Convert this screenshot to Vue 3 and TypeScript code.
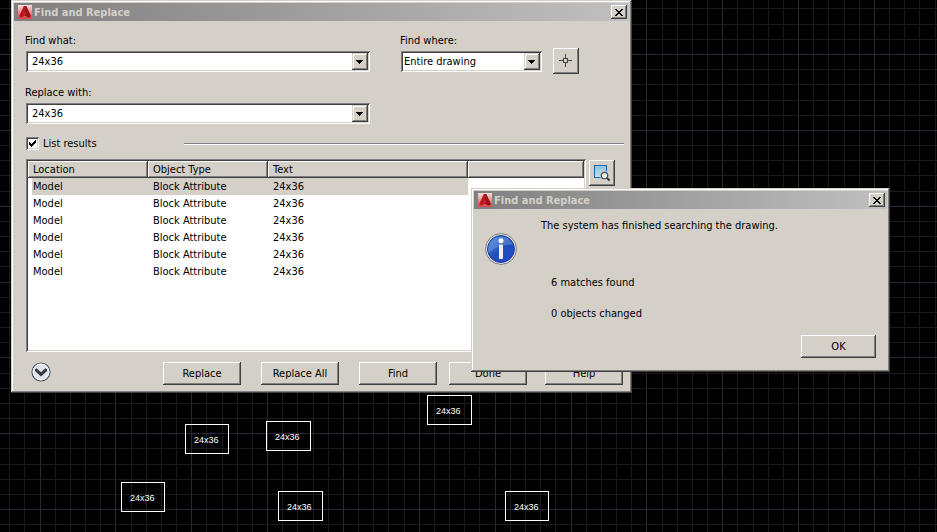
<script setup lang="ts">
import { ref } from 'vue'

interface ResultRow {
  id: number
  location: string
  type: string
  text: string
}

interface Block {
  x: number
  y: number
  w: number
}

const findText = ref('24x36')
const replaceText = ref('24x36')
const scope = ref('Entire drawing')
const listResults = ref(true)
const selected = ref(1)

const results: ResultRow[] = Array.from({ length: 6 }, (_, i) => ({
  id: i + 1,
  location: 'Model',
  type: 'Block Attribute',
  text: '24x36',
}))

const blocks: Block[] = [
  { x: 427, y: 395, w: 45 },
  { x: 185, y: 424, w: 44 },
  { x: 266, y: 421, w: 45 },
  { x: 121, y: 482, w: 44 },
  { x: 278, y: 491, w: 45 },
  { x: 505, y: 491, w: 44 },
]

// Every fifth grid line is a major one.
const step = 15.17
function gridLines(origin: number, from: number, count: number) {
  return Array.from({ length: count }, (_, k) => {
    const i = from + k
    return { at: Math.floor(origin + i * step), major: i % 5 === 0 }
  })
}
const columns = gridLines(40.05, -2, 180)
const rows = gridLines(54.5, -3, 120)
</script>

<template>
  <main class="canvas">
    <svg class="grid" aria-hidden="true" shape-rendering="crispEdges">
      <rect v-for="c in columns" :key="'c' + c.at" :x="c.at" y="0" width="1" height="100%" :class="c.major ? 'major' : 'minor'" />
      <rect v-for="r in rows" :key="'r' + r.at" x="0" :y="r.at" width="100%" height="1" :class="r.major ? 'major' : 'minor'" />
    </svg>

    <div
      v-for="(b, i) in blocks"
      :key="i"
      class="block"
      :style="{ left: b.x + 'px', top: b.y + 'px', width: b.w + 'px' }"
    >24x36</div>

    <section class="window find" role="dialog" aria-labelledby="find-title">
      <header class="titlebar">
        <svg class="logo" viewBox="0 0 14 14" aria-hidden="true">
          <defs>
            <linearGradient id="logo-bg" x1="0" y1="0" x2="0" y2="1">
              <stop offset="0" stop-color="#f6dedd" />
              <stop offset="1" stop-color="#dd4247" />
            </linearGradient>
          </defs>
          <rect width="14" height="14" fill="url(#logo-bg)" />
          <path d="M5.8 1h2.4L13 11.4 10 12.6 7 10.4 4 12.6 1 11.4z" fill="#b9181d" />
          <path d="M7 1h1.2L13 11.4 10 12.6 7 10.4z" fill="#981216" />
          <path d="M7 6.6 8.2 9.2H5.8z" fill="#cf3338" />
        </svg>
        <h1 id="find-title" class="title">Find and Replace</h1>
        <button class="close" type="button" aria-label="Close">
          <svg viewBox="0 0 8 7" width="8" height="7" shape-rendering="crispEdges" aria-hidden="true">
            <path d="M0 0h2v1h1v1h2V1h1V0h2v1H7v1H6v1H5v1h1v1h1v1h1v1H6V6H5V5H3v1H2v1H0V6h1V5h1V4h1V3H2V2H1V1H0z" />
          </svg>
        </button>
      </header>

      <form class="body" @submit.prevent>
        <div class="fields">
          <div class="field wide">
            <label for="find-what">Find what:</label>
            <div class="combo">
              <input id="find-what" v-model="findText" type="text" />
              <button class="drop" type="button" aria-label="Previous searches">
                <svg class="arrow" viewBox="0 0 8 4"><path d="M0 0h7v1H6v1H5v1H4v1H3V3H2V2H1V1H0z" /></svg>
              </button>
            </div>
          </div>
          <div class="field where">
            <label for="find-where">Find where:</label>
            <div class="combo">
              <select id="find-where" v-model="scope">
                <option>Entire drawing</option>
              </select>
              <span class="drop" aria-hidden="true">
                <svg class="arrow" viewBox="0 0 8 4"><path d="M0 0h7v1H6v1H5v1H4v1H3V3H2V2H1V1H0z" /></svg>
              </span>
            </div>
          </div>
          <button class="tool pick" type="button" aria-label="Select objects">
            <svg viewBox="0 0 14 14" width="14" height="14" shape-rendering="crispEdges" aria-hidden="true">
              <path d="M6 0h1v4H6zM6 9h1v4H6zM0 6h4v1H0zM9 6h4v1H9z" fill="#45433f" />
              <path d="M4 4h5v5H4zM5 5v3h3V5z" fill="#45433f" fill-rule="evenodd" />
            </svg>
          </button>
        </div>

        <div class="field wide">
          <label for="replace-with">Replace with:</label>
          <div class="combo">
            <input id="replace-with" v-model="replaceText" type="text" />
            <button class="drop" type="button" aria-label="Previous replacements">
              <svg class="arrow" viewBox="0 0 8 4"><path d="M0 0h7v1H6v1H5v1H4v1H3V3H2V2H1V1H0z" /></svg>
            </button>
          </div>
        </div>

        <div class="option">
          <label class="check">
            <input v-model="listResults" type="checkbox" />
            <svg v-if="listResults" class="tick" viewBox="0 0 13 13" shape-rendering="crispEdges" aria-hidden="true">
              <path d="M3 5h1v1h1v1h1V6h1V5h1V4h1V3h1v3H9v1H8v1H7v1H6v1H5V9H4V8H3z" />
            </svg>
            <span>List results</span>
          </label>
          <hr class="rule" />
        </div>

        <div class="results">
          <div class="list">
            <table>
              <colgroup>
                <col class="c1" /><col class="c2" /><col class="c3" /><col />
              </colgroup>
              <thead>
                <tr>
                  <th scope="col">Location</th>
                  <th scope="col">Object Type</th>
                  <th scope="col">Text</th>
                  <td class="filler"></td>
                </tr>
              </thead>
              <tbody>
                <tr v-for="r in results" :key="r.id" :class="{ selected: r.id === selected }" @click="selected = r.id">
                  <td>{{ r.location }}</td>
                  <td>{{ r.type }}</td>
                  <td>{{ r.text }}</td>
                  <td></td>
                </tr>
              </tbody>
            </table>
          </div>
          <button class="tool" type="button" aria-label="Zoom to highlighted result">
            <svg viewBox="0 0 18 18" width="18" height="18" aria-hidden="true">
              <defs>
                <linearGradient id="pane" x1="0" y1="0" x2="0" y2="1">
                  <stop offset="0" stop-color="#8cc4dd" />
                  <stop offset="1" stop-color="#c3e1ec" />
                </linearGradient>
              </defs>
              <rect x="1.5" y="1.5" width="12" height="12" fill="url(#pane)" stroke="#0f68b5" />
              <circle cx="11.5" cy="11.5" r="4.6" fill="#d4d0c8" />
              <path d="m13.6 13.6 3 3" stroke="#333" stroke-width="2" />
              <circle cx="11.5" cy="11.5" r="3.2" fill="#e8f1f3" stroke="#4b5052" stroke-width="1.3" />
            </svg>
          </button>
        </div>

        <footer class="actions">
          <button class="expand" type="button" aria-label="More options">
            <svg viewBox="0 0 20 20" width="20" height="20" aria-hidden="true">
              <circle cx="10" cy="10" r="9" fill="#e2e4e8" stroke="#4b5160" stroke-width="1.2" />
              <circle cx="10" cy="10" r="7.9" fill="none" stroke="#fbfbfc" />
              <path d="M4 7.2 5.6 6.2 10 10.2l4.4-4L16 7.2V9l-6 5.6L4 9z" fill="#343a46" />
            </svg>
          </button>
          <div class="group">
            <button class="push" type="button">Replace</button>
            <button class="push" type="button">Replace All</button>
            <button class="push" type="button">Find</button>
          </div>
          <div class="group end">
            <button class="push" type="button">Done</button>
            <button class="push" type="button">Help</button>
          </div>
        </footer>
      </form>
    </section>

    <section class="window message" role="alertdialog" aria-labelledby="message-title">
      <header class="titlebar">
        <svg class="logo" viewBox="0 0 14 14" aria-hidden="true">
          <rect width="14" height="14" fill="url(#logo-bg)" />
          <path d="M5.8 1h2.4L13 11.4 10 12.6 7 10.4 4 12.6 1 11.4z" fill="#b9181d" />
          <path d="M7 1h1.2L13 11.4 10 12.6 7 10.4z" fill="#981216" />
          <path d="M7 6.6 8.2 9.2H5.8z" fill="#cf3338" />
        </svg>
        <h2 id="message-title" class="title">Find and Replace</h2>
        <button class="close" type="button" aria-label="Close">
          <svg viewBox="0 0 8 7" width="8" height="7" shape-rendering="crispEdges" aria-hidden="true">
            <path d="M0 0h2v1h1v1h2V1h1V0h2v1H7v1H6v1H5v1h1v1h1v1h1v1H6V6H5V5H3v1H2v1H0V6h1V5h1V4h1V3H2V2H1V1H0z" />
          </svg>
        </button>
      </header>
      <div class="notice">
        <svg class="info" viewBox="0 0 32 32" width="32" height="32" aria-hidden="true">
          <defs>
            <linearGradient id="info-bg" x1="0" y1="0" x2="1" y2="1">
              <stop offset="0" stop-color="#4f86dd" />
              <stop offset="0.5" stop-color="#2050b8" />
              <stop offset="1" stop-color="#2346d2" />
            </linearGradient>
          </defs>
          <circle cx="16" cy="16" r="15.4" fill="#f2f2f2" stroke="#77777a" />
          <circle cx="16" cy="16" r="13.5" fill="url(#info-bg)" stroke="#1b3c92" />
          <path d="M3.5 20A13 13 0 0 1 28 11.5Q14 11 3.5 20z" fill="#83a9ec" opacity=".4" />
          <circle cx="16" cy="7.7" r="2.5" fill="#fff" />
          <rect x="14" y="11.5" width="4" height="14.5" rx="1" fill="#eceff5" />
        </svg>
        <div class="copy">
          <p>The system has finished searching the drawing.</p>
          <ul>
            <li>6 matches found</li>
            <li>0 objects changed</li>
          </ul>
        </div>
        <button class="push ok" type="button">OK</button>
      </div>
    </section>
  </main>
</template>

<style>
body {
  margin: 0;
  background: #000;
}
</style>

<style scoped>
.canvas {
  position: relative;
  min-height: 100vh;
  overflow: hidden;
  background: #000;
  color: #000;
  font: 11px/14px "DejaVu Sans Condensed", "Noto Sans", sans-serif;
}
.canvas * {
  box-sizing: border-box;
}
.grid {
  position: absolute;
  inset: 0;
  width: 100%;
  height: 100%;
}
.minor {
  fill: #1a1a1f;
}
.major {
  fill: #272a36;
}
.block {
  position: absolute;
  height: 30px;
  padding: 0 8px;
  border: 1px solid #fff;
  color: #fff;
  font: 9px/30px "Liberation Sans", sans-serif;
}
button,
input,
select {
  margin: 0;
  padding: 0;
  border: 0;
  border-radius: 0;
  font: inherit;
  color: inherit;
  background: #d4d0c8;
}
.window {
  position: absolute;
  padding: 3px;
  background: #d4d0c8;
  box-shadow: inset -1px -1px #404040, inset 1px 1px #d4d0c8, inset -2px -2px #808080, inset 2px 2px #fff;
}
.find {
  left: 11px;
  top: 0;
  width: 621px;
}
.message {
  left: 471px;
  top: 188px;
  width: 419px;
}
.titlebar {
  display: flex;
  align-items: center;
  gap: 2px;
  height: 18px;
  padding: 0 2px 0 4px;
  background: linear-gradient(90deg, #808080, #c0c0c0);
}
.logo {
  width: 14px;
  height: 14px;
}
.title {
  flex: 1;
  margin: 0;
  color: #d4d0c8;
  font-size: 11px;
  line-height: 16px;
  padding-top: 1px;
  font-weight: bold;
}
.close,
.push,
.tool,
.drop {
  display: flex;
  align-items: center;
  justify-content: center;
  background: #d4d0c8;
  box-shadow: inset -1px -1px #404040, inset 1px 1px #fff, inset -2px -2px #808080;
}
.close {
  width: 16px;
  height: 14px;
}
.body {
  padding: 13px 5px 5px 12px;
}
.fields {
  display: flex;
  align-items: flex-start;
}
.field {
  display: grid;
  gap: 3px;
}
.field label {
  margin-left: -1px;
}
.wide {
  width: 344px;
}
.where {
  width: 141px;
  margin-left: 31px;
}
.combo {
  display: flex;
  height: 21px;
  padding: 2px;
  background: #fff;
  box-shadow: inset 1px 1px #808080, inset -1px -1px #fff, inset 2px 2px #404040, inset -2px -2px #d4d0c8;
}
.combo input,
.combo select {
  flex: 1;
  min-width: 0;
  padding-left: 4px;
  background: transparent;
  appearance: none;
  outline: 0;
}
.combo select {
  margin-right: -16px;
  padding-left: 1px;
}
.drop {
  width: 16px;
  pointer-events: none;
  box-shadow: inset -1px -1px #404040, inset 1px 1px #d4d0c8, inset -2px -2px #808080, inset 2px 2px #fff;
}
.arrow {
  width: 8px;
  height: 4px;
  shape-rendering: crispEdges;
}
.tool {
  width: 26px;
  height: 26px;
}
.pick {
  margin: 14px 0 0 11px;
}
.fields + .field {
  margin-top: 12px;
}
.option {
  display: flex;
  align-items: center;
  height: 13px;
  margin-top: 13px;
}
.check {
  position: relative;
  display: flex;
  align-items: center;
  gap: 4px;
  width: 158px;
}
.check input {
  width: 13px;
  height: 13px;
  appearance: none;
  background: #fff;
  box-shadow: inset 1px 1px #808080, inset -1px -1px #fff, inset 2px 2px #404040, inset -2px -2px #d4d0c8;
}
.tick {
  position: absolute;
  left: 0;
  width: 13px;
  height: 13px;
  pointer-events: none;
}
.rule {
  flex: 1;
  height: 2px;
  margin: 0;
  border: 0;
  border-top: 1px solid #808080;
  background: #fff;
}
.results {
  display: flex;
  gap: 3px;
  margin-top: 9px;
}
.list {
  width: 560px;
  height: 193px;
  padding: 2px;
  overflow: hidden;
  background: #fff;
  box-shadow: inset 1px 1px #808080, inset -1px -1px #fff, inset 2px 2px #404040, inset -2px -2px #d4d0c8;
}
.results .tool {
  margin-top: 1px;
}
table {
  width: 100%;
  table-layout: fixed;
  border-spacing: 0;
}
.c1,
.c2 {
  width: 120px;
}
.c3 {
  width: 200px;
}
th,
.filler {
  height: 17px;
  padding: 1px 5px 0;
  background: #d4d0c8;
  box-shadow: inset -1px -1px #404040, inset 1px 1px #fff, inset -2px -2px #808080;
  font-weight: normal;
  text-align: left;
}
tbody td {
  height: 17px;
  padding: 1px 5px 0;
}
tbody td:first-child {
  border-left: 4px solid #fff;
  padding-left: 1px;
}
.selected td:not(:last-child) {
  background: #d4d0c8;
}
.actions {
  display: flex;
  align-items: flex-start;
  gap: 12px;
  margin-top: 10px;
  padding: 0 1px 0 5px;
}
.expand {
  display: flex;
  margin-right: auto;
}
.group {
  display: flex;
  gap: 20px;
}
.end {
  gap: 18px;
}
.push {
  width: 78px;
  height: 23px;
}
.notice {
  display: grid;
  grid-template-columns: auto 1fr auto;
  padding: 10px 11px 11px;
}
.info {
  margin-top: 14px;
}
.copy {
  margin-left: 24px;
}
.copy p {
  margin: 0;
}
.copy ul {
  display: grid;
  gap: 17px;
  margin: 43px 0 0 10px;
  padding: 0;
  list-style: none;
}
.ok {
  grid-column: 3;
  grid-row: 2;
  width: 75px;
  margin-top: 14px;
}
</style>
